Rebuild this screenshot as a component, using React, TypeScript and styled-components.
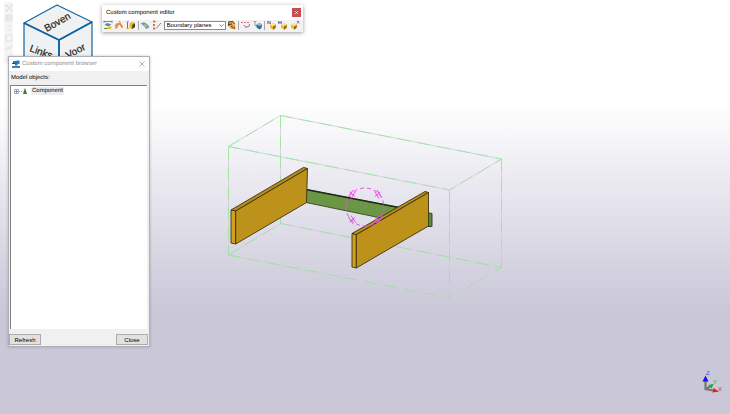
import React from "react";
import styled, { createGlobalStyle } from "styled-components";

const GlobalStyle = createGlobalStyle`
  * { box-sizing: border-box; }
  body { margin: 0; font-family: "Liberation Sans", Arial, sans-serif; font-size: 6px; line-height: 8px; color: #000; text-rendering: geometricPrecision; }
  button, select { font: inherit; color: inherit; }
`;

const Workspace = styled.main`
  position: relative;
  display: grid;
  place-items: center;
  min-height: 100vh;
  overflow: hidden;
  background: linear-gradient(#fff 25%, #e4e2eb 50%, #cac7d8 75%);
`;

const Drawing = styled.svg`
  display: block;
  flex: none;
`;

const CubeHolder = styled.div`
  position: absolute;
  top: 3px;
  left: 22px;
`;

const AxisHolder = styled.div`
  position: absolute;
  right: 4px;
  bottom: 20px;
`;

const SideStrip = styled.nav`
  position: absolute;
  top: 2px;
  left: 4px;
  display: flex;
  flex-direction: column;
  gap: 2px;
  padding: 2px 0;
  background: #f5f5f5;
  border-radius: 2px;
`;

const IconButton = styled.button<{ $wide?: boolean }>`
  display: grid;
  place-items: center;
  width: ${(p) => (p.$wide ? 11 : 9)}px;
  height: ${(p) => (p.$wide ? 10 : 8)}px;
  padding: 0;
  border: 0;
  background: none;
`;

const FloatingWindow = styled.section`
  position: absolute;
  display: flex;
  flex-direction: column;
`;

const EditorWindow = styled(FloatingWindow)`
  top: 5px;
  left: 102px;
  width: 201px;
  background: #fff;
  box-shadow: 0 1px 4px rgba(0, 0, 0, 0.4);
`;

const EditorTitle = styled.header`
  display: flex;
  align-items: center;
  justify-content: space-between;
  height: 15px;
  padding: 0 2px 0 4px;
`;

const Heading = styled.h1`
  margin: 0;
  font: inherit;
`;

const RedClose = styled.button`
  display: grid;
  place-items: center;
  width: 9px;
  height: 9px;
  padding: 0;
  border: 0;
  background: #c84d50;
`;

const Toolbar = styled.div`
  display: flex;
  align-items: center;
  justify-content: space-between;
  height: 12px;
  padding: 0 2px 2px 0;
  background: #f2f2f2;
`;

const Separator = styled.i`
  width: 1px;
  height: 9px;
  background: #a8a8a8;
`;

const SelectBox = styled.label`
  display: grid;
  align-items: center;
  width: 62px;
  height: 9px;
  & > * { grid-area: 1 / 1; }
  & > svg { justify-self: end; margin-right: 2px; pointer-events: none; }
`;

const PlaneSelect = styled.select`
  appearance: none;
  width: 100%;
  height: 9px;
  padding: 0 8px 0 2px;
  border: 1px solid #8c8c8c;
  border-radius: 0;
  background: #fff;
  line-height: 7px;
`;

const BrowserWindow = styled(FloatingWindow)`
  top: 56px;
  bottom: 67px;
  left: 8px;
  width: 142px;
  border: 1px solid #b0aeb6;
  background: #f0f0f0;
  box-shadow: 0 0 3px rgba(0, 0, 0, 0.2);
`;

const BrowserTitle = styled.header`
  display: flex;
  align-items: center;
  gap: 2px;
  height: 14px;
  padding: 0 3px;
  background: #fff;
  color: #8c8c8c;
  & > button { margin-left: auto; }
`;

const Caption = styled.p`
  margin: 0;
  padding: 3px 2px;
  height: 14px;
`;

const Tree = styled.ul`
  flex: 1;
  margin: 0 2px 0 1px;
  padding: 1px 3px;
  border-top: 1px solid #808080;
  border-left: 1px solid #808080;
  background: #fff;
  list-style: none;
`;

const TreeItem = styled.li`
  display: flex;
  align-items: center;
  gap: 3px;
`;

const TreeLabel = styled.span`
  padding: 0 1px;
  background: #ededed;
`;

const Footer = styled.footer`
  display: flex;
  justify-content: space-between;
  padding: 5px 1px 1px 0;
`;

const PushButton = styled.button`
  width: 32px;
  height: 11px;
  padding: 0;
  border: 1px solid #adadad;
  background: #e1e1e1;
  line-height: 8px;
`;

type IconName = "fit" | "arc" | "plane" | "layers" | "axis" | "hand" | "points" | "tree" | "boxN" | "boxH" | "boxX";

const YellowBox = () => (
  <>
    <path d="M3 5 6 3.2 9 5 8.5 8 6 9.8 3 7.5Z" fill="#f0b92a" />
    <path d="M6 6.2 9 4.5 8.5 8 6 9.8Z" fill="#94641e" />
    <path d="M3 5 6 3.2 9 5 6 6.2Z" fill="#ffe07a" />
  </>
);

const glyphs: Record<IconName, React.ReactNode> = {
  fit: (
    <>
      <path d="M1 1.5H9" stroke="#b070c0" />
      <path d="M1 .5V3M9 .5V3" stroke="#a95cba" strokeWidth=".8" />
      <path d="M1.5 5 4 3 8.5 4.2 5.5 6.5Z" fill="#5f8f98" />
      <path d="M1 8.5H5" stroke="#5a8450" />
      <path d="M5.5 6 9 7 7.5 9.5 4.5 8.5Z" fill="#ecbf36" />
    </>
  ),
  arc: (
    <>
      <path d="M1.5 8.5 4 4.5 6 3.5 8.5 7.5" stroke="#e58a3a" strokeWidth="1.9" fill="none" />
      <path d="M1 6 3.5 3" stroke="#94622f" strokeWidth=".8" />
      <path d="M5 1 6.5 3.5" stroke="#eb9c4a" strokeWidth="1.2" />
    </>
  ),
  plane: (
    <>
      <path d="M1.5 1V9" stroke="#ab4cbb" />
      <path d="M.5 1.5H3M.5 8.5H3" stroke="#dcb24c" />
      <path d="M3.5 3.5 6.5 1.8 9 3V7L6 9.2 3.5 8Z" fill="#edb924" />
      <path d="M6.2 5 9 3.3V7L6.2 9Z" fill="#4c3d2a" />
    </>
  ),
  layers: (
    <>
      <path d="M.5 3.5 4 2.2 8 4.5 4.5 6Z" fill="#609cc0" />
      <path d="M2.5 5.5 5.5 4 9 5.5 6 7.5Z" fill="#c0b252" />
      <path d="M4.5 7 8.5 5.5 9.5 7.5 6 9Z" fill="#6fa3d2" />
    </>
  ),
  axis: (
    <>
      <path d="M2 .5V2.5M2 4V6M2 7.5V9.5" stroke="#e85a45" strokeWidth="1.8" />
      <path d="M4 8.5 9 3" stroke="#777" strokeWidth=".9" />
      <path d="M3 1.5H4.5" stroke="#e9a297" />
    </>
  ),
  hand: (
    <>
      <path d="M1 1.5 5 1 8 4 8.5 9 4 9 1.5 6Z" fill="#e0ad4c" />
      <path d="M1 2 6 1.5 7.5 4M2 4.5 5 4M4 6 8 9M1.5 3V6" stroke="#3b2d20" strokeWidth=".9" fill="none" />
      <path d="M5.5 6.5H8V8.5H5.5Z" fill="#dc6038" />
    </>
  ),
  points: (
    <>
      <path d="M0 2.5H2M3 2.5H5M6 2.5H8" stroke="#e06c66" />
      <path d="M3 5 4.5 7 8 6.5 8.5 4" stroke="#6288cc" fill="none" />
      <circle cx="5" cy="7" r="1" fill="#e9908c" />
    </>
  ),
  tree: (
    <>
      <path d="M.5 1.5H3.5M2 2V5.5H4" stroke="#848e96" strokeWidth=".8" fill="none" />
      <path d="M3.5 4.5 6.5 3 9 4.5 8.5 8 6.5 9.5 3.5 7.5Z" fill="#336f99" />
      <path d="M3.5 4.5 6.5 3 9 4.5 6.5 6Z" fill="#90c0d6" />
    </>
  ),
  boxN: (
    <>
      <YellowBox />
      <path d="M.8 4V1L3.2 4V1" stroke="#6c58ae" strokeWidth=".9" fill="none" />
    </>
  ),
  boxH: (
    <>
      <YellowBox />
      <path d="M.8 1V4M3.2 1V4M.8 2.5H3.2" stroke="#5c4cd4" strokeWidth=".9" />
    </>
  ),
  boxX: (
    <>
      <g transform="translate(-2 0)"><YellowBox /></g>
      <path d="M7 .8 9.2 3.5M9.2 .8 7 3.5" stroke="#c447a0" strokeWidth=".9" />
    </>
  ),
};

const Tool = ({ name, label }: { name: IconName; label: string }) => (
  <IconButton $wide aria-label={label}>
    <Drawing width="10" height="10" viewBox="0 0 10 10">{glyphs[name]}</Drawing>
  </IconButton>
);

const sideIcons: { label: string; d: string }[] = [
  { label: "Fit view", d: "M1 1 7 7M7 1 1 7M1 3V1H3M5 1H7V3M7 5V7H5M3 7H1V5" },
  { label: "Grid", d: "M1 1H7V7H1ZM1 3H7M1 5H7M3 1V7" },
  { label: "Rows", d: "M2 2H6M2 6H6" },
  { label: "Area", d: "M1 1H7V7H1Z" },
  { label: "Link", d: "M1 6 3 3 5 5 7 1M2 7 6 3" },
  { label: "Edit", d: "M2 6 6 2" },
];

const SideTools = () => (
  <SideStrip aria-label="View tools">
    {sideIcons.map((icon) => (
      <IconButton key={icon.label} aria-label={icon.label}>
        <Drawing width="8" height="8" viewBox="0 0 8 8">
          <path d={icon.d} stroke="#e0e0e0" fill="none" />
        </Drawing>
      </IconButton>
    ))}
  </SideStrip>
);

const ViewCube = () => (
  <CubeHolder>
    <Drawing width="72" height="76" viewBox="22 3 72 76" role="img" aria-label="View cube">
      <g fill="#f0f1f2" stroke="#1265a3" strokeLinejoin="round" strokeWidth="1.2">
        <path d="M57 5 92 22 59 40 24 23Z" />
        <path d="M24 23 59 40V78L24 60Z" />
        <path d="M92 22 59 40V78L92 60Z" />
        <path d="M24 23 59 40 92 22M59 40V78" fill="none" strokeWidth="1.8" />
      </g>
      <g fontSize="10" fill="#222" stroke="#222" strokeWidth=".2" textAnchor="middle">
        <text transform="translate(59 25) rotate(-30)">Boven</text>
        <text transform="translate(40 55) rotate(20)">Links</text>
        <text transform="translate(77 54) rotate(-28)">Voor</text>
      </g>
    </Drawing>
  </CubeHolder>
);

const EditorPanel = () => (
  <EditorWindow aria-label="Custom component editor">
    <EditorTitle>
      <Heading>Custom component editor</Heading>
      <RedClose aria-label="Close editor">
        <Drawing width="5" height="5" viewBox="0 0 5 5">
          <path d="M1.2 1.2 3.8 3.8M3.8 1.2 1.2 3.8" stroke="#fff" strokeWidth=".8" />
        </Drawing>
      </RedClose>
    </EditorTitle>
    <Toolbar role="toolbar">
      <Tool name="fit" label="Fit planes" />
      <Tool name="arc" label="Create distance" />
      <Tool name="plane" label="Bind to plane" />
      <Separator />
      <Tool name="layers" label="Construction plane" />
      <Tool name="axis" label="Reference distance" />
      <SelectBox>
        <PlaneSelect aria-label="Plane type" defaultValue="Boundary planes">
          <option>Boundary planes</option>
          <option>Center planes</option>
        </PlaneSelect>
        <Drawing width="5" height="3" viewBox="0 0 5 3">
          <path d="M.5 .5 2.5 2.3 4.5 .5" stroke="#666" strokeWidth=".8" fill="none" />
        </Drawing>
      </SelectBox>
      <Tool name="hand" label="Pick handles" />
      <Separator />
      <Tool name="points" label="Variables" />
      <Tool name="tree" label="Component browser" />
      <Separator />
      <Tool name="boxN" label="Save as new" />
      <Tool name="boxH" label="Save component" />
      <Tool name="boxX" label="Close component" />
    </Toolbar>
  </EditorWindow>
);

const BrowserPanel = () => (
  <BrowserWindow aria-label="Custom component browser">
    <BrowserTitle>
      <Drawing width="8" height="8" viewBox="0 0 8 8">
        <path d="M0 7H8" stroke="#12649d" strokeWidth="1.6" />
        <path d="M1 1H4L5 .5H7.5V4H5.5V5.5H3V3.5H1Z" fill="#287cb5" />
        <path d="M0 3.5H3.5" stroke="#164f7c" />
      </Drawing>
      <Heading>Custom component browser</Heading>
      <IconButton aria-label="Close browser">
        <Drawing width="6" height="6" viewBox="0 0 6 6">
          <path d="M.5 .5 5.5 5.5M5.5 .5 .5 5.5" stroke="#8b8b8b" strokeWidth=".7" />
        </Drawing>
      </IconButton>
    </BrowserTitle>
    <Caption>Model objects:</Caption>
    <Tree>
      <TreeItem>
        <Drawing width="14" height="8" viewBox="0 0 14 8">
          <path d="M.5 2.5H4.5V6.5H.5Z" fill="#fff" stroke="#a5adb8" />
          <path d="M1 4.5H4M2.5 3V6" stroke="#536e99" strokeWidth=".7" />
          <path d="M5 4.5H8" stroke="#aaa" strokeDasharray="1 1" />
          <path d="M11 .8 13 7H9Z" fill="#447d2c" />
        </Drawing>
        <TreeLabel>Component</TreeLabel>
      </TreeItem>
    </Tree>
    <Footer>
      <PushButton>Refresh</PushButton>
      <PushButton>Close</PushButton>
    </Footer>
  </BrowserWindow>
);

const boundingBox =
  "M228.5 146.5 280.5 115.5 501.5 159 449.5 190ZM228.5 255 280.5 223.5 501.5 267.5 449.5 298ZM228.5 146.5V255M280.5 115.5V223.5M501.5 159V267.5M449.5 190V298";

const ModelView = () => (
  <Drawing width="276" height="186" viewBox="227 114 276 186" role="img" aria-label="Component model">
    <path d={boundingBox} fill="none" stroke="#cfced3" strokeWidth=".8" />
    <path d={boundingBox} fill="none" stroke="#94e698" strokeWidth=".8" strokeDasharray="13 7" />
    <g stroke="#3c3215" strokeLinejoin="round" strokeWidth=".9">
      <path d="M306 189.5 399 207.5 381 218 306 202.5Z" fill="#6b9744" stroke="#344923" />
      <path d="M306 189.5 399 207.5" stroke="#1c2b18" strokeWidth="1.7" />
      <path d="M231 210 303.5 167.4 307.5 168.5 235.7 211Z" fill="#b88c1b" />
      <path d="M231 210 235.7 211V244L231 243Z" fill="#d1a01c" />
      <path d="M235.7 211 307.5 168.5 306.5 202.5 235.7 244Z" fill="#bc921b" />
      <path d="M427 212.5 432 213.5V226.5H427Z" fill="#5c8a3a" stroke="#29401f" />
      <path d="M352 233.5 425 191.5 428.5 192.5 356.3 234.7Z" fill="#b88c1b" />
      <path d="M352 233.5 356.3 234.7V268L352 267Z" fill="#d1a01c" />
      <path d="M356.3 234.7 428.5 192.5V226L356.3 268Z" fill="#bc921b" />
    </g>
    <g stroke="#ee4cee" fill="none">
      <circle cx="365" cy="207" r="19" strokeDasharray="4 3" />
      <path d="M348.5 197 353 190M351 198.5 355.5 191.5M349.5 192 355 196.5" />
      <path d="M374.5 191.5 379 198.5M377 190 381.5 197M375 196.5 380.5 192" />
      <path d="M348.5 217 353 224M351 215.5 355.5 222.5M349.5 222 355 217.5" />
      <path d="M374.5 222.5 379 215.5M377 224 381.5 217M375 217.5 380.5 222" />
      <path d="M364.5 207H366" />
    </g>
  </Drawing>
);

const AxisTriad = () => (
  <AxisHolder>
    <Drawing width="24" height="26" viewBox="702 368 24 26" role="img" aria-label="Coordinate axes">
      <path d="M705.5 381V389L713 390.5M706 389 710 386.5" stroke="#777" strokeWidth="2.2" fill="none" />
      <path d="M705.5 375.5 708.5 381.5H702.5Z" fill="#1616e0" />
      <path d="M719 391.5 713.5 388 712.5 392.5Z" fill="#e31c1c" />
      <path d="M713.8 383.8 708.5 385 711.5 388.5Z" fill="#20aa35" />
      <g fontSize="6">
        <text x="706" y="375" fill="#3c3ce8">Z</text>
        <text x="713" y="384" fill="#2cc04a">Y</text>
        <text x="718" y="391" fill="#e0303a">X</text>
      </g>
    </Drawing>
  </AxisHolder>
);

export default function App() {
  return (
    <>
      <GlobalStyle />
      <Workspace>
        <ModelView />
        <SideTools />
        <ViewCube />
        <AxisTriad />
        <EditorPanel />
        <BrowserPanel />
      </Workspace>
    </>
  );
}
